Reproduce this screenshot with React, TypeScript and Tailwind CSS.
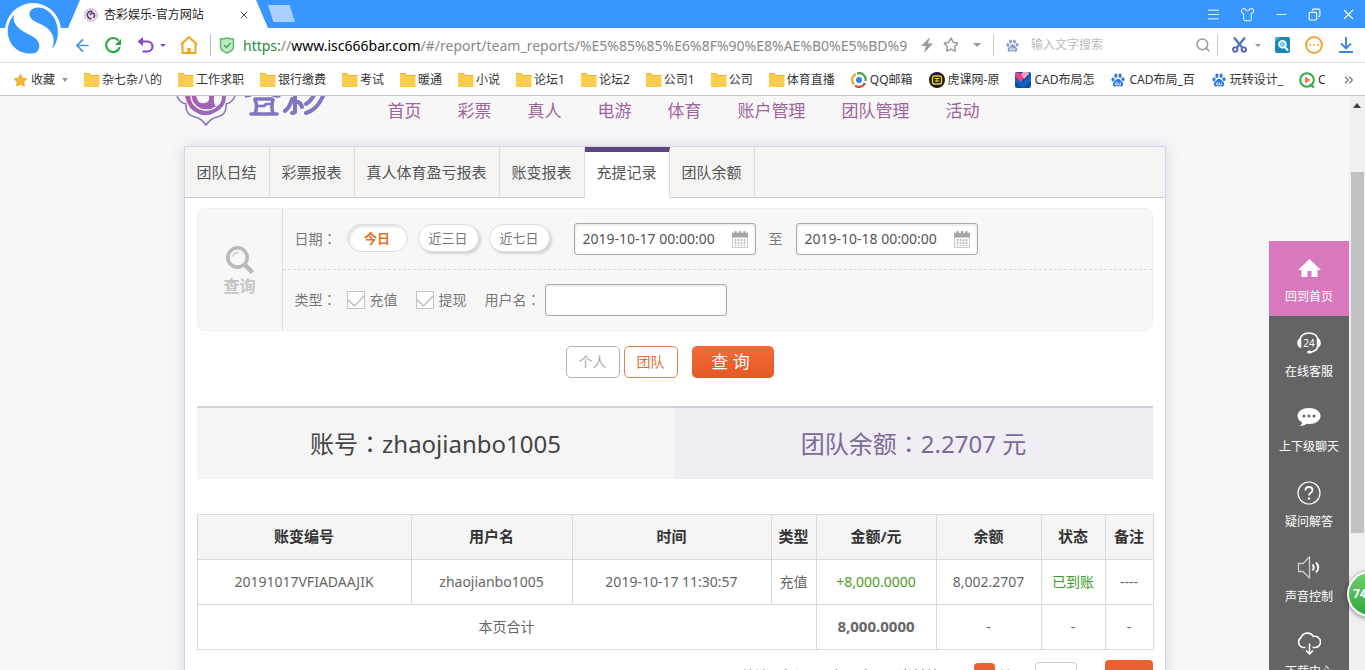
import React from "react";
import {
  ArrowLeft,
  ChevronsRight,
  Menu,
  Minus,
  Search,
  Shirt,
  Star,
  X,
  Copy,
} from "lucide-react";

const FONT = "font-['Noto_Sans','Noto_Sans_CJK_SC',sans-serif]";

function Caret({ className }: { className: string }) {
  return (
    <svg viewBox="0 0 8 4" className={`h-1 w-2 shrink-0 ${className}`} fill="currentColor" aria-hidden="true">
      <path d="M0 0h8L4 4z" />
    </svg>
  );
}

function Colon() {
  return <span className="font-['Noto_Sans_CJK_TC',sans-serif] leading-none">：</span>;
}

function Paw({ className }: { className: string }) {
  return (
    <svg viewBox="0 0 16 16" className={`shrink-0 ${className}`} fill="currentColor" aria-hidden="true">
      <ellipse cx="2.3" cy="7.3" rx="1.8" ry="2.3" />
      <ellipse cx="5.6" cy="3.2" rx="1.8" ry="2.5" />
      <ellipse cx="10.4" cy="3.2" rx="1.8" ry="2.5" />
      <ellipse cx="13.7" cy="7" rx="1.8" ry="2.2" />
      <path d="M8 6.5c2 0 2.6 1.6 4 3 1.500 1.300 2.300 2.500 1.800 4.200-.5 1.600-2 2-3.400 1.800-1.600-.3-3.200-.3-4.800 0-1.500.2-3-.2-3.400-1.800-.5-1.700.5-2.900 1.800-4.200C5.500 8.100 6 6.500 8 6.500z" />
      <path d="M5 12a1.300 1.300 0 0 1 2-1v2.800H6A1.300 1.300 0 0 1 5 12zM8.600 11v2.200q0 .6.7.6h1.500V11" fill="none" stroke="#fff" strokeWidth=".9" />
    </svg>
  );
}

function BrowserLogo() {
  return (
    <svg viewBox="4 0 58 60" className="absolute left-1 top-0 z-10 h-[60px] w-[58px]" aria-hidden="true">
      <circle cx="33" cy="31" r="28" fill="#fff" />
      <path d="M14 15C7 22 5 36 13 46c7 8 18 9 24 6 5-6 2-13-7-17C19 30 12 24 14 15z" fill="#3897fe" />
      <path d="M52 49C60 41 61 21 48 11 42 6 34 7 31 10c-4 5 0 10 7 13 13 5 19 14 14 26z" fill="#3897fe" />
    </svg>
  );
}

function Favicon() {
  return (
    <svg viewBox="0 0 14 14" className="h-3.5 w-3.5 shrink-0" aria-hidden="true">
      <circle cx="7" cy="7" r="6.300" fill="#f1e9f4" stroke="#a98bb5" strokeWidth="1" strokeDasharray="2 1" />
      <path d="M8.500 3.500a3.700 3.700 0 1 0-.8 7M6.500 7.200a2 2 0 0 1 3.500-1.400c1 1.500.5 3.200-.8 4" fill="none" stroke="#5d3d78" strokeWidth="1.700" />
    </svg>
  );
}

function TitleBar() {
  return (
    <div className="flex h-7 items-stretch bg-[#3897fe] pl-[68px] pr-2">
      <div className="flex w-[200px] items-center bg-white pl-4 pr-[18px] pt-0.5 [clip-path:polygon(6%_0,94%_0,100%_100%,0_100%)]">
        <Favicon />
        <span className="ml-1.5 flex-1 truncate text-xs text-[#222]">杏彩娱乐-官方网站</span>
        <button aria-label="关闭标签" className="text-[#555]">
          <X size={12} strokeWidth={2} />
        </button>
      </div>
      <button aria-label="新标签页" className="mt-[5px] h-[17px] w-[27px] bg-[#a9d0ff] [clip-path:polygon(0_0,80%_0,100%_100%,20%_100%)]" />
      <div className="ml-auto flex items-center gap-[19px] text-white">
        <button aria-label="菜单"><Menu size={15} strokeWidth={1.500} /></button>
        <button aria-label="皮肤"><Shirt size={15} strokeWidth={1.500} /></button>
        <button aria-label="最小化"><Minus size={15} strokeWidth={1.500} /></button>
        <button aria-label="还原">
          <Copy size={13} strokeWidth={2} className="-scale-x-100" />
        </button>
        <button aria-label="关闭"><X size={17} strokeWidth={1.500} /></button>
      </div>
    </div>
  );
}

function Toolbar() {
  return (
    <div className="flex h-[35px] items-center border-b border-[#e2e2e2] bg-white pl-[73px] pr-3">
      <button aria-label="后退" className="text-[#4a90d9]">
        <ArrowLeft size={19} strokeWidth={2.200} />
      </button>
      <button aria-label="刷新" className="ml-3">
        <svg viewBox="0 0 18 18" className="h-[18px] w-[18px]" fill="none" stroke="#25a83c" strokeWidth="2.200">
          <path d="M15.800 11.200A7 7 0 1 1 14.500 4.500" />
          <path d="M17 3v6h-6z" fill="#25a83c" stroke="none" />
        </svg>
      </button>
      <button aria-label="恢复" className="ml-[15px] flex items-center gap-1.5">
        <svg viewBox="0 0 17 17" className="h-[17px] w-[17px]" fill="none" stroke="#8a45c8" strokeWidth="2.200">
          <path d="M3 4.500h7.500a5 5 0 0 1 0 10H5.500" />
          <path d="M6 0v9L.5 4.500z" fill="#8a45c8" stroke="none" />
        </svg>
        <svg viewBox="0 0 6 3" className="h-[3px] w-1.5" fill="#8a45c8"><path d="M0 0h6L3 3z" /></svg>
      </button>
      <button aria-label="主页" className="ml-3.5">
        <svg viewBox="0 0 18 18" className="h-[18px] w-[18px]" fill="none" stroke="#f0a71c" strokeWidth="2" strokeLinejoin="round">
          <path d="M1 8.500 9 1l8 7.500M2.500 7.500V17h13V7.500" />
          <path d="M7.300 12h3.400v4.500H7.300z" fill="#f0a71c" stroke="none" />
        </svg>
      </button>
      <span className="ml-3 h-[22px] w-px shrink-0 bg-[#bbb]" />
      <svg viewBox="0 0 16 17" className="ml-2 h-[17px] w-4 shrink-0" aria-hidden="true">
        <path d="M1.500 2Q5 2 8 1q3 1 6.500 1v8q0 3.500-6.500 6Q1.500 13.500 1.500 10z" fill="#bfe8c5" stroke="#5cb56d" strokeWidth="1.400" />
        <path d="m5 8 2.500 2.500L11.500 6" fill="none" stroke="#46a35a" strokeWidth="1.500" />
      </svg>
      <div role="textbox" aria-label="地址栏" className="ml-2 w-[674px] min-w-0 shrink overflow-hidden whitespace-nowrap pt-0.5 text-sm leading-6 text-[#888]">
        <span className="text-[#2a8a3c]">https:</span>//<span className="text-black">www.isc666bar.com</span>
        /#/report/team_reports/%E5%85%85%E6%8F%90%E8%AE%B0%E5%BD%9
      </div>
      <svg viewBox="0 0 12 16" className="ml-1 h-4 w-3 shrink-0" fill="#999" aria-hidden="true"><path d="M9 0 0 9h5L3 16l9-9.500H7z" /></svg>
      <button aria-label="收藏网页" className="ml-2.5 text-[#999]"><Star size={16} strokeWidth={2.200} /></button>
      <Caret className="ml-3.5 text-[#999]" />
      <span className="ml-3 h-[22px] w-px shrink-0 bg-[#ccc]" />
      <Paw className="ml-3 h-[13px] w-[13px] text-[#8b9dc6]" />
      <input aria-label="搜索" placeholder="输入文字搜索" className="ml-3 min-w-0 flex-1 text-xs outline-none placeholder:text-[#bbb]" />
      <button aria-label="搜索" className="text-[#999]"><Search size={16} strokeWidth={2.200} /></button>
      <span className="ml-1.5 h-[22px] w-px shrink-0 bg-[#ccc]" />
      <button aria-label="截图" className="ml-3.5 flex items-center gap-2">
        <svg viewBox="0 0 15 16" className="h-4 w-[15px]" fill="none" strokeWidth="1.900">
          <path d="M2 0.500 10.500 11M13 .5 4.500 11" stroke="#5578c0" strokeWidth="2.400" />
          <circle cx="3.200" cy="12.600" r="2.200" stroke="#5a62b8" />
          <circle cx="11.800" cy="12.600" r="2.200" stroke="#5a62b8" />
        </svg>
        <svg viewBox="0 0 6 3" className="h-[3px] w-1.5" fill="#999"><path d="M0 0h6L3 3z" /></svg>
      </button>
      <button aria-label="识图" className="ml-3.5">
        <svg viewBox="0 0 15 16" className="h-4 w-[15px]">
          <rect width="15" height="16" rx="2" fill="#178ab8" />
          <path d="M0 2a2 2 0 0 1 2-2h3L0 5z" fill="#46b9d6" />
          <circle cx="7.500" cy="7.300" r="3.500" fill="#7fd0e8" stroke="#fff" strokeWidth="1.600" />
          <path d="m10 10 3 3.500" stroke="#fff" strokeWidth="2" />
        </svg>
      </button>
      <button aria-label="更多" className="ml-[15px]">
        <svg viewBox="0 0 18 18" className="h-[18px] w-[18px]">
          <circle cx="9" cy="9" r="7.900" fill="none" stroke="#efa632" strokeWidth="2" />
          <circle cx="5.300" cy="9" r="1" fill="#efa632" /><circle cx="9" cy="9" r="1" fill="#efa632" /><circle cx="12.700" cy="9" r="1" fill="#efa632" />
        </svg>
      </button>
      <button aria-label="下载" className="ml-4">
        <svg viewBox="0 0 14 16" className="h-4 w-3.5" fill="none" stroke="#3d86dc" strokeWidth="1.900">
          <path d="M7 0v11.500M2 6.500l5 5 5-5M0 15h14" />
        </svg>
      </button>
    </div>
  );
}

function Folder() {
  return (
    <svg viewBox="0 0 16 14" className="h-3.5 w-4 shrink-0" aria-hidden="true">
      <path d="M0 .5h5.500L7 2.500h8.500V14H0z" fill="#fbcd4e" />
      <path d="M0 .5h5.500L7 2.500h8.500" fill="none" stroke="#e9b43a" />
    </svg>
  );
}

const bookmarks: { label: string; icon?: React.ReactNode }[] = [
  { label: "杂七杂八的" },
  { label: "工作求职" },
  { label: "银行缴费" },
  { label: "考试" },
  { label: "暖通" },
  { label: "小说" },
  { label: "论坛1" },
  { label: "论坛2" },
  { label: "公司1" },
  { label: "公司" },
  { label: "体育直播" },
  {
    label: "QQ邮箱",
    icon: (
      <svg viewBox="0 0 16 16" className="h-4 w-4 shrink-0" fill="none" strokeWidth="2.200">
        <path d="M3 12.500A6.500 6.500 0 0 1 5 2" stroke="#f2a424" />
        <path d="M6 1.500A6.500 6.500 0 0 1 14.500 9" stroke="#3fa648" />
        <path d="M14 11A6.500 6.500 0 0 1 4 13.500" stroke="#df4030" />
        <circle cx="8" cy="8" r="3" fill="#3088dd" />
      </svg>
    ),
  },
  {
    label: "虎课网-原",
    icon: (
      <svg viewBox="0 0 16 16" className="h-4 w-4 shrink-0">
        <circle cx="8" cy="8" r="8" fill="#1d1c10" />
        <rect x="3.500" y="4" width="9" height="8" rx="2" fill="none" stroke="#e8cf35" strokeWidth="1.400" />
        <path d="M5.500 6.500h5M5.500 9h5M8 6v4" stroke="#e8cf35" />
      </svg>
    ),
  },
  {
    label: "CAD布局怎",
    icon: (
      <svg viewBox="0 0 16 16" className="h-4 w-4 shrink-0">
        <rect width="16" height="16" rx="2" fill="#0d4ea6" />
        <path d="M16 3v6l-8 7-8-7V6l8 4z" fill="#1464bd" />
        <path d="M0 1.500q3-2 6 .5l3 4-3 4-6-5.500z" fill="#ee3d84" />
        <path d="m6 2 2-2h5q2 1 1 2L9 7z" fill="#f59bc0" />
      </svg>
    ),
  },
  { label: "CAD布局_百", icon: <Paw className="h-3.5 w-4 text-[#2f77dd]" /> },
  { label: "玩转设计_", icon: <Paw className="h-3.5 w-4 text-[#2f77dd]" /> },
  {
    label: "C",
    icon: (
      <svg viewBox="0 0 16 16" className="h-4 w-4 shrink-0">
        <circle cx="8" cy="8" r="6.800" fill="none" stroke="#2eab45" strokeWidth="2" />
        <path d="m11 12 4 3.500" stroke="#2eab45" strokeWidth="2" />
        <path d="m6 4.500 5.500 3.500L6 11.500z" fill="#f07838" />
      </svg>
    ),
  },
];

function BookmarkBar() {
  return (
    <div className="flex h-[33px] items-center gap-4 whitespace-nowrap border-b border-[#c8c8c8] bg-white pl-[13px] pr-3 pt-0.5 text-xs text-[#333]">
      <button className="flex items-center gap-[3px]">
        <Star size={15} strokeWidth={1} className="fill-[#f5b82e] text-[#e8a31f]" />
        <span>收藏</span>
        <svg viewBox="0 0 6 4" className="ml-1 h-1 w-1.5" fill="#999"><path d="M0 0h6L3 4z" /></svg>
      </button>
      {bookmarks.map((b) => (
        <a key={b.label} href="#" className={`flex shrink-0 items-center ${b.icon ? "gap-[3px]" : "gap-0.5"}`}>
          {b.icon ?? <Folder />}
          <span>{b.label}</span>
        </a>
      ))}
      <button aria-label="更多书签" className="ml-auto text-[#555]"><ChevronsRight size={14} strokeWidth={1.800} /></button>
    </div>
  );
}

function SiteLogo() {
  return (
    <svg viewBox="0 0 154 30" className="h-[30px] w-[154px] shrink-0" aria-hidden="true">
      <defs>
        <linearGradient id="lg" x1="0" y1="0" x2="1" y2="1">
          <stop offset="0" stopColor="#b457ae" />
          <stop offset="1" stopColor="#8a70ba" />
        </linearGradient>
      </defs>
      <path d="M1 0q3 7 9 8-1 11 9 13 6 1 11 8 5-7 11-8 10-2 9-13 6-1 9-8" fill="none" stroke="#8c6fb4" strokeWidth="1.500" />
      <path d="M9 0q3 14 14 18 8 3 15-1Q50 12 50 0h-4q0 8-6 11-3-5-2-11h-5q1 6-4 7t-7-2l-2-5z" fill="url(#lg)" />
      <path d="M15 0q0 8 9 13 9 3 16-2" fill="none" stroke="#f7f7f7" strokeWidth="1.500" />
      <g fill="none" stroke="#8174c0" strokeWidth="4" strokeLinecap="round" strokeLinejoin="round">
        <path d="M70 0q5 0 7-3M95-2q4 3 8 2" strokeWidth="3" />
        <path d="M79 3h17M79 4q3 6 0 14M97 4q-2 7 0 14M75 18h26" strokeWidth="3.500" />
        <path d="M82 10h6l2-2h5" strokeWidth="2.500" />
        <path d="M119-2v18q-1 1-3 1M116 3q-2 8-7 12M122 6q3 1 4 5" />
        <path d="M147 0q-6 14-17 17M138-1q-3 6-8 9" />
      </g>
    </svg>
  );
}

const navItems = ["首页", "彩票", "真人", "电游", "体育", "账户管理", "团队管理", "活动"];
const tabs = ["团队日结", "彩票报表", "真人体育盈亏报表", "账变报表", "充提记录", "团队余额"];

function CalendarIcon() {
  return (
    <svg viewBox="0 0 16 17" className="h-[17px] w-4 shrink-0" aria-hidden="true">
      <path d="M.5 2h15v14.500H.5z" fill="#fff" stroke="#ccc" />
      <path d="M0 2h16v4.500H0z" fill="#a6a6a6" />
      <path d="M3.500 0v3.500M12.500 0v3.500M8 0v3" stroke="#a6a6a6" strokeWidth="2" />
      <path d="M3.500 8v7M6.500 8v7M9.500 8v7M12.500 8v7" stroke="#b5b5b5" strokeWidth="1.500" strokeDasharray="2 1" />
    </svg>
  );
}

const field = "h-8 w-[182px] rounded-[3px] border border-[#aaa] bg-white shadow-[inset_0_1px_3px_rgba(0,0,0,0.12)]";

function DateField({ label, value }: { label: string; value: string }) {
  return (
    <label className={`${field} flex items-center pl-2 pr-[7px]`}>
      <input aria-label={label} defaultValue={value} className="min-w-0 flex-1 text-sm text-[#555] outline-none" />
      <CalendarIcon />
    </label>
  );
}

function CheckItem({ label }: { label: string }) {
  return (
    <label className="flex items-center gap-[5px]">
      <input
        type="checkbox"
        defaultChecked
        className="peer sr-only"
      />
      <svg viewBox="0 0 18 18" className="h-[18px] w-[18px] [&>path]:opacity-0 peer-checked:[&>path]:opacity-100" fill="#fff" stroke="#c4c4c4" aria-hidden="true">
        <rect x=".5" y=".5" width="17" height="17" />
        <path d="m1 9 6.500 6L17 5" fill="none" stroke="#b5b5b5" strokeWidth="1.200" />
      </svg>
      {label}
    </label>
  );
}

const pill = "h-7 w-[61px] rounded-full border border-[#ddd] bg-white";

function Filters() {
  return (
    <section className="flex rounded-lg border border-[#f0f0f0] bg-[#f7f7f7] text-sm text-[#777]">
      <div className="flex w-[85px] shrink-0 flex-col items-center justify-center border-r border-[#ddd] pt-1 text-base font-bold leading-6 text-[#c4c4c4]">
        <svg viewBox="0 0 28 28" className="h-7 w-7" fill="none" aria-hidden="true">
          <circle cx="11.500" cy="11.500" r="9.700" stroke="#b9b9b9" strokeWidth="3.500" />
          <path d="M6.500 10.500q2-4 6-4" stroke="#ccc" strokeWidth="1.300" />
          <path d="m18.500 18.500 8 8" stroke="#b9b9b9" strokeWidth="4.500" />
        </svg>
        查询
      </div>
      <div className="min-w-0 flex-1">
        <div className="flex h-[61px] items-center border-b border-dashed border-[#d8d8d8] pl-3">
          <span className="whitespace-nowrap">日期<Colon /></span>
          <div className="ml-2.5 flex gap-2.5 pb-0.5 text-[13px]">
            <button className={`${pill} font-bold text-[#e2701f] shadow-[inset_2px_2px_3px_rgba(0,0,0,0.12)]`}>今日</button>
            <button className={`${pill} shadow-[2px_2px_3px_rgba(0,0,0,0.15)]`}>近三日</button>
            <button className={`${pill} shadow-[2px_2px_3px_rgba(0,0,0,0.15)]`}>近七日</button>
          </div>
          <div className="ml-6 flex items-center gap-[13px]">
            <DateField label="开始时间" value="2019-10-17 00:00:00" />
            <span>至</span>
            <DateField label="结束时间" value="2019-10-18 00:00:00" />
          </div>
        </div>
        <div className="flex h-[60px] items-center pl-3">
          <span className="mr-2.5 whitespace-nowrap">类型<Colon /></span>
          <div className="flex gap-[18px]">
            <CheckItem label="充值" />
            <CheckItem label="提现" />
            <label className="flex items-center whitespace-nowrap">
              <span className="mr-1">用户名<Colon /></span>
              <input className={`${field} px-2 outline-none`} />
            </label>
          </div>
        </div>
      </div>
    </section>
  );
}

const columns = ["账变编号", "用户名", "时间", "类型", "金额/元", "余额", "状态", "备注"];
const cell = "h-[45px] border border-[#d9d9d9]";

function RecordTable() {
  return (
    <table className="mt-[35px] w-full table-fixed border-collapse text-center text-sm text-[#666]">
      <colgroup>
        <col className="w-[214px]" />
        <col className="w-[161px]" />
        <col className="w-[199px]" />
        <col className="w-[45px]" />
        <col className="w-[120px]" />
        <col className="w-[105px]" />
        <col className="w-[64px]" />
        <col className="w-[48px]" />
      </colgroup>
      <thead className="bg-[#f5f5f5] text-[15px] text-[#333]">
        <tr>
          {columns.map((c) => (
            <th key={c} className={cell}>{c}</th>
          ))}
        </tr>
      </thead>
      <tbody>
        <tr>
          <td className={cell}>20191017VFIADAAJIK</td>
          <td className={cell}>zhaojianbo1005</td>
          <td className={cell}>2019-10-17 11:30:57</td>
          <td className={cell}>充值</td>
          <td className={`${cell} text-[#4f9a1e]`}>+8,000.0000</td>
          <td className={cell}>8,002.2707</td>
          <td className={`${cell} text-[#3a9e2c]`}>已到账</td>
          <td className={cell}>----</td>
        </tr>
        <tr>
          <td className={cell} colSpan={4}>本页合计</td>
          <td className={`${cell} text-[15px] font-bold`}>8,000.0000</td>
          <td className={cell}>-</td>
          <td className={cell}>-</td>
          <td className={cell}>-</td>
        </tr>
      </tbody>
    </table>
  );
}

function Pagination() {
  return (
    <div className="mt-2.5 flex h-8 items-center justify-end whitespace-nowrap text-sm text-[#777]">
      <div className="flex gap-2.5">
        <span>总计 1条记录</span>
        <span>每页条目</span>
        <span>当前第 1 页</span>
      </div>
      <button className="ml-1 h-[26px] w-[21px] rounded bg-[#ec6030] leading-5 text-white">1</button>
      <label className="ml-1 flex items-center gap-2">
        转至
        <input aria-label="页码" className="h-7 w-[42px] rounded border border-[#ccc] bg-white outline-none" />
        <span className="-ml-0.5">页</span>
      </label>
      <button className="ml-2 h-8 w-12 rounded bg-[#ec6030] text-base font-bold leading-none text-white">GO</button>
    </div>
  );
}

function HeadsetIcon() {
  return (
    <svg viewBox="0 0 24 24" className="h-6 w-6" fill="none" stroke="#fff" strokeWidth="1.500">
      <path d="M2.500 9a10 10 0 0 1 19 0M21 15q-1 5-7 6" />
      <path d="M3.500 8v8Q1 15 1 12t2.500-4zM20.500 8v8q2.500-1 2.500-4t-2.500-4z" fill="#fff" />
      <ellipse cx="12.500" cy="21" rx="2.500" ry="1.500" fill="#fff" stroke="none" />
      <text x="12" y="15.500" textAnchor="middle" fontSize="10" fill="#fff" stroke="none">24</text>
    </svg>
  );
}

const sideItems: { label: string; icon: React.ReactNode }[] = [
  {
    label: "回到首页",
    icon: (
      <svg viewBox="0 0 24 24" className="h-6 w-6" fill="#fff"><path d="M12.500 3 1 14h3.500v7h6v-6h4v6h6v-7H24z" /></svg>
    ),
  },
  { label: "在线客服", icon: <HeadsetIcon /> },
  {
    label: "上下级聊天",
    icon: (
      <svg viewBox="0 0 24 24" className="h-6 w-6">
        <path d="M12 2C5.500 2 .5 5.500.5 10c0 3 2 5 4.500 6.500 0 2-1.500 3-2.500 3.500 3 0 5.500-1 7-2.300l2.500.2c6.500 0 11.500-3.500 11.500-8S18.500 2 12 2z" fill="#fff" />
        <circle cx="7" cy="10" r="1.500" fill="#646464" /><circle cx="12" cy="10" r="1.500" fill="#646464" /><circle cx="17" cy="10" r="1.500" fill="#646464" />
      </svg>
    ),
  },
  {
    label: "疑问解答",
    icon: (
      <svg viewBox="0 0 24 24" className="h-6 w-6" fill="none" stroke="#fff">
        <circle cx="12" cy="12" r="11" strokeWidth="1.200" />
        <path d="M8.500 9.500q0-3.500 3.500-3.500t3.500 3q0 1.800-2 3-1.500.9-1.500 2.500" strokeWidth="1.800" />
        <circle cx="12" cy="17.500" r="1.200" fill="#fff" stroke="none" />
      </svg>
    ),
  },
  {
    label: "声音控制",
    icon: (
      <svg viewBox="0 0 24 24" className="h-6 w-6" fill="none" stroke="#fff" strokeWidth="1.300">
        <path d="M1.500 7.500h4.500L12.500 1v21L6 15.500H1.500z" stroke="#ccc" />
        <path d="M15.500 8.500q2.500 3 0 6M19 6.500q4.500 5 0 10" strokeWidth="1.900" />
      </svg>
    ),
  },
  {
    label: "下载中心",
    icon: (
      <svg viewBox="0 0 24 24" className="h-6 w-6" fill="none" stroke="#fff" strokeWidth="1.600">
        <path d="M8.500 16.500H6.500A5.500 5.500 0 0 1 4 6.500 7 7 0 0 1 16.500 5.500 5.600 5.600 0 1 1 17.500 16.500H15.500" />
        <path d="M12.500 12.500v10.500M9 19.500l3.500 3.500 3.500-3.500" />
      </svg>
    ),
  },
];

function SideMenu() {
  return (
    <aside className="absolute right-0 top-[145px] w-20 bg-[#646464]">
      {sideItems.map((s, i) => (
        <a
          key={s.label}
          href="#"
          className={`flex h-[75px] flex-col items-center gap-[7px] whitespace-nowrap pt-[15px] text-xs leading-5 text-white ${i === 0 ? "bg-[#d979bd]" : ""}`}
        >
          {s.icon}
          {s.label}
        </a>
      ))}
    </aside>
  );
}

export default function App() {
  return (
    <div className={`${FONT} flex h-screen flex-col overflow-hidden`}>
      <header className="relative shrink-0">
        <BrowserLogo />
        <TitleBar />
        <Toolbar />
        <BookmarkBar />
      </header>
      <div className="relative flex min-h-0 flex-1 overflow-hidden">
        <main className="relative min-w-0 flex-1 overflow-hidden bg-[#f7f7f7]">
          <div className="mx-auto max-w-[982px]">
            <div className="-ml-2 flex h-[50px] items-start">
              <SiteLogo />
              <nav className="ml-[58px] flex gap-9 whitespace-nowrap text-[17px] leading-[30px] text-[#a0649c]">
                {navItems.map((n) => (
                  <a key={n} href="#">{n}</a>
                ))}
              </nav>
            </div>
            <div className="border border-[#d9d4e2] bg-white pb-6 shadow-[0_0_14px_rgba(130,90,180,0.2)]">
              <div role="tablist" className="flex h-[51px] border-b border-[#ccc] bg-[#f5f4f3] text-[15px] text-[#555]">
                {tabs.map((t) => (
                  <button
                    key={t}
                    role="tab"
                    aria-selected={t === "充提记录"}
                    className={
                      t === "充提记录"
                        ? "-mb-px border-r border-t-[5px] border-[#ddd] border-t-[#5c4583] bg-white px-3 pb-[5px]"
                        : "border-r border-[#ddd] px-3"
                    }
                  >
                    {t}
                  </button>
                ))}
              </div>
              <div className="px-3 pt-2.5">
                <Filters />
                <div className="flex justify-center pr-2.5 pt-[15px] text-sm">
                  <button className="h-8 w-[54px] rounded-[5px] border border-[#b5b5b5] text-[#aaa]">个人</button>
                  <button className="ml-1 h-8 w-[54px] rounded-[5px] border border-[#dd8248] text-[#dd6f35]">团队</button>
                  <button className="ml-3.5 h-8 w-[82px] rounded-[5px] bg-linear-to-b from-[#f46a38] to-[#e25a25] pr-1 text-[17px] text-white">查 询</button>
                </div>
                <div className="mt-7 grid grid-cols-2 text-center text-2xl leading-[71px]">
                  <div className="border-t-2 border-[#d3d3d6] bg-[#f5f5f5] text-[#444]">账号<Colon />zhaojianbo1005</div>
                  <div className="border-t-2 border-[#d2cde2] bg-[#f0eef4] text-[#7a6a98]">团队余额<Colon />2.2707 元</div>
                </div>
                <RecordTable />
                <Pagination />
              </div>
            </div>
          </div>
          <SideMenu />
        </main>
        <div className="flex w-4 shrink-0 flex-col items-center bg-[#f0f0f0] pt-[7px]" aria-hidden="true">
          <svg viewBox="0 0 8 5" className="h-[5px] w-2" fill="#444"><path d="M0 5h8L4 0z" /></svg>
          <div className="mt-16 h-[361px] w-[13px] bg-[#c1c1c1]" />
        </div>
        <div className="absolute -right-7 top-[475px] flex h-[46px] w-[46px] items-center rounded-full border-2 border-white bg-linear-to-b from-[#6ccf70] to-[#2fa83c] pl-1 text-xs font-bold text-white shadow-[0_1px_5px_rgba(0,0,0,0.5)]">
          74
        </div>
      </div>
    </div>
  );
}
